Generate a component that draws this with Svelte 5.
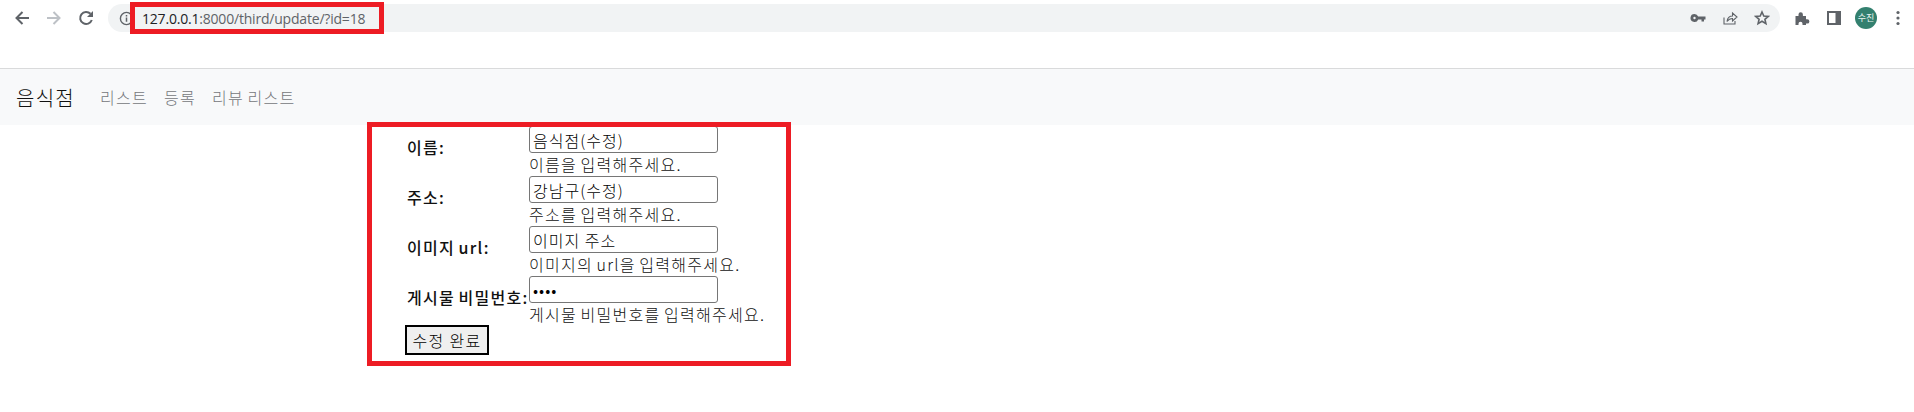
<script>
  const fields = [
    { label: '이름:', type: 'text', value: '음식점(수정)', help: '이름을 입력해주세요.' },
    { label: '주소:', type: 'text', value: '강남구(수정)', help: '주소를 입력해주세요.' },
    { label: '이미지 url:', type: 'text', value: '이미지 주소', help: '이미지의 url을 입력해주세요.' },
    { label: '게시물 비밀번호:', type: 'password', value: '1234', help: '게시물 비밀번호를 입력해주세요.' }
  ];
</script>

<div class="page">
  <header class="toolbar">
    <div class="nav-buttons">
      <svg class="icon" viewBox="0 0 16 16"><path d="M15 8H3M8.500 2 2.500 8 8.500 14" fill="none" stroke="#5f6368" stroke-width="2"/></svg>
      <svg class="icon" viewBox="0 0 16 16"><path d="M1 8H13M7.500 2 13.500 8 7.500 14" fill="none" stroke="#bdc1c6" stroke-width="2"/></svg>
      <svg class="icon" viewBox="0 0 16 16"><path d="M13.800 10A6 6 0 1 1 12.500 3.800" fill="none" stroke="#5f6368" stroke-width="2"/><path d="M15 1v6H9z" fill="#5f6368"/></svg>
    </div>
    <div class="address">
      <svg class="info" viewBox="0 0 16 16"><circle cx="8" cy="8" r="6.500" fill="none" stroke="#5f6368" stroke-width="1.500"/><path d="M8 7v4.500M8 4.200v1.600" stroke="#5f6368" stroke-width="1.600"/></svg>
      <span class="url"><b>127.0.0.1</b>:8000/third/update/?id=18</span>
      <div class="address-actions">
        <svg class="icon" viewBox="0 0 16 16"><path fill-rule="evenodd" d="M4.500 4a4 4 0 0 1 3.700 2.500H15.500v3H14v2h-2.500v-2H8.200A4 4 0 1 1 4.500 4zM4.500 6.800a1.200 1.200 0 1 0 0 2.400 1.200 1.200 0 0 0 0-2.400z" fill="#5f6368"/></svg>
        <svg class="icon" viewBox="0 0 16 16"><path d="M2 7.500V14h11v-3" fill="none" stroke="#5f6368" stroke-width="1.100"/><path d="M5 11.500C5.500 8 8 6 10.500 6V3l4.500 4-4.500 4V8.500C8 8.500 6.500 9.500 5 11.500z" fill="none" stroke="#5f6368" stroke-width="1.100"/></svg>
        <svg class="icon" viewBox="0 0 16 16"><path d="M8 2l1.800 4 4.400.4-3.300 2.900 1 4.300L8 11.300 4.100 13.600l1-4.300L1.800 6.400 6.200 6z" fill="none" stroke="#5f6368" stroke-width="1.600"/></svg>
      </div>
    </div>
    <div class="browser-actions">
      <svg class="icon" viewBox="0 0 16 16"><path d="M1.500 6H4.500V4.500a2.200 2.200 0 0 1 4.400 0V6H12v3.200h1.200a2.200 2.200 0 0 1 0 4.400H12V15H8.500v-1.200a2 2 0 0 0-4 0V15H1.500z" fill="#5f6368"/></svg>
      <svg class="icon" viewBox="0 0 16 16"><path fill-rule="evenodd" d="M1 1h14v14H1zM3 3v10h6.500V3z" fill="#5f6368"/></svg>
      <span class="avatar">수진</span>
      <svg class="icon dots" viewBox="0 0 16 16"><circle cx="8" cy="2.500" r="1.600"/><circle cx="8" cy="8" r="1.600"/><circle cx="8" cy="13.500" r="1.600"/></svg>
    </div>
  </header>

  <nav class="navbar">
    <span class="brand">음식점</span>
    <a href="#list">리스트</a>
    <a href="#new">등록</a>
    <a href="#reviews">리뷰 리스트</a>
  </nav>

  <main class="content">
    <form class="form" onsubmit={(e) => e.preventDefault()}>
      <table>
        <tbody>
          {#each fields as f}
            <tr>
              <th><span>{f.label}</span></th>
              <td>
                <input type={f.type} value={f.value} />
                <span class="help">{f.help}</span>
              </td>
            </tr>
          {/each}
        </tbody>
      </table>
      <button type="submit">수정 완료</button>
    </form>
  </main>

  <div class="mark mark-url"></div>
  <div class="mark mark-form"></div>
</div>

<style>
  :global(body) {
    margin: 0;
    background: #fff;
    font-family: "Noto Sans CJK KR", "Noto Sans", sans-serif;
  }
  .page {
    position: relative;
    height: 412px;
    overflow: hidden;
    color: #212529;
    letter-spacing: 0.08em;
    word-spacing: -1.300px;
  }
  .toolbar {
    display: flex;
    align-items: center;
    height: 36px;
    margin-bottom: 32px;
    letter-spacing: 0;
    word-spacing: 0;
  }
  .icon {
    width: 16px;
    height: 16px;
    flex: none;
  }
  .nav-buttons {
    display: flex;
    gap: 16px;
    padding-left: 14px;
    width: 108px;
    box-sizing: border-box;
  }
  .address {
    flex: none;
    width: 1672px;
    height: 28px;
    display: flex;
    align-items: center;
    background: #f1f3f4;
    border-radius: 14px;
    box-sizing: border-box;
    padding-left: 11px;
  }
  .info {
    width: 15px;
    height: 15px;
    flex: none;
  }
  .url {
    margin-left: 8px;
    font: 14px "Open Sans", "Noto Sans", sans-serif;
    letter-spacing: -0.200px;
    color: #5f6368;
    flex: 1;
  }
  .url b {
    font-weight: 400;
    color: #202124;
  }
  .address-actions {
    display: flex;
    gap: 16px;
    padding-right: 10px;
  }
  .browser-actions {
    flex: 1;
    display: flex;
    align-items: center;
    gap: 16px;
    padding-left: 14px;
  }
  .avatar {
    width: 22px;
    height: 22px;
    margin: 0 -3px;
    border-radius: 50%;
    background: #33806f;
    color: #e8f3f0;
    font-size: 9px;
    line-height: 22px;
    text-align: center;
    flex: none;
  }
  .dots {
    fill: #5f6368;
  }
  .navbar {
    height: 57px;
    box-sizing: border-box;
    display: flex;
    align-items: center;
    padding-left: 16px;
    background: #f8f9fa;
    border-top: 1px solid #d9dadb;
    font-size: 16px;
  }
  .brand {
    font-size: 20px;
    margin-right: 17px;
    color: #111;
    font-weight: 300;
  }
  .navbar a {
    color: #75777a;
    text-decoration: none;
    padding: 0 8px;
    font-weight: 300;
  }
  .content {
    padding-left: 405px;
  }
  table {
    border-collapse: collapse;
    margin-top: 1px;
  }
  th {
    padding: 0 0 8px 2px;
    width: 122px;
    text-align: left;
    font-size: 16px;
    font-weight: 500;
    color: #111;
    white-space: nowrap;
    vertical-align: middle;
  }
  th span {
    display: block;
    width: 122px;
  }
  td {
    padding: 0;
    vertical-align: top;
    height: 50px;
  }
  input {
    display: block;
    width: 189px;
    height: 27px;
    box-sizing: border-box;
    margin: 0;
    padding: 1px 3px;
    border: 1px solid #767676;
    border-radius: 3px;
    font: 300 16px "Liberation Sans Narrow", "Noto Sans CJK KR", sans-serif;
    letter-spacing: 1px;
    color: #000;
    background: #fff;
  }
  .help {
    display: block;
    height: 23px;
    font-size: 16px;
    font-weight: 300;
    color: #111;
    line-height: 23px;
    white-space: nowrap;
  }
  button {
    display: block;
    width: 84px;
    height: 30px;
    margin-top: -1px;
    padding: 0;
    box-sizing: border-box;
    background: #efefef;
    border: 2px solid #000;
    color: #000;
    font: 300 16px "Noto Sans CJK KR", sans-serif;
    letter-spacing: 0.08em;
  }
  .mark {
    position: absolute;
    box-sizing: border-box;
    border: 5px solid #ed1c24;
    pointer-events: none;
  }
  .mark-url {
    left: 130px;
    top: 2px;
    width: 254px;
    height: 32px;
  }
  .mark-form {
    left: 367px;
    top: 122px;
    width: 424px;
    height: 244px;
  }
</style>
